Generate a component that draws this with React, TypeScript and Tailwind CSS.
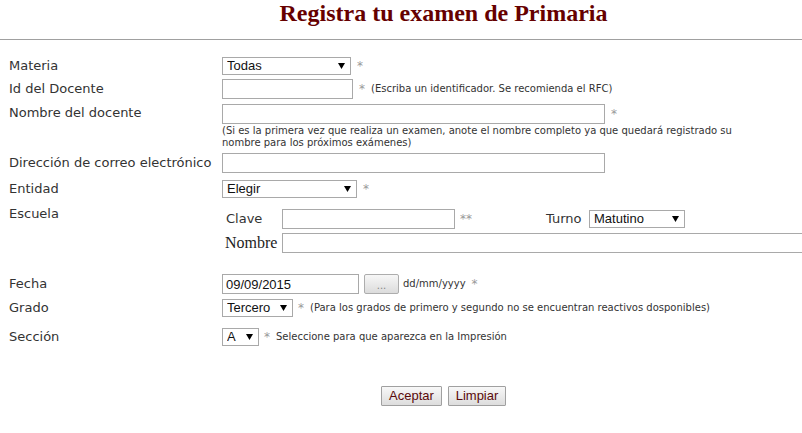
import React from "react";

function Sel({ className, text }: { className: string; text: string }) {
  return (
    <div className={`relative h-[18px] shrink-0 ${className}`}>
      <select className="block appearance-none w-full h-[18px] border border-[#a9a9a9] bg-white pl-[4px] pr-[14px] py-0 text-[13px] leading-[16px] text-[#111] font-['Liberation_Sans',Arial,sans-serif] outline-none">
        <option>{text}</option>
      </select>
      <svg className="absolute right-[6px] top-[6px] pointer-events-none" width="7" height="6" viewBox="0 0 7 6">
        <polygon points="0,0 7,0 3.5,6" fill="#000" />
      </svg>
    </div>
  );
}

function Ast({ className = "" }: { className?: string }) {
  return <span className={`text-[12px] leading-[16px] text-[#999] ${className}`}>*</span>;
}

const label = "w-[222px] shrink-0 pl-[9px] text-[13px] leading-[16px] text-[#333]";
const input = "block h-[20px] shrink-0 border border-[#a9a9a9] bg-white px-[3px] text-[13px] font-['Liberation_Sans',Arial,sans-serif] text-[#111] outline-none";
const note = "text-[10px] leading-[12px] text-[#333]";

export default function App() {
  return (
    <div className="w-[802px] h-[433px] overflow-hidden bg-white font-['DejaVu_Sans',Verdana,sans-serif]">
      <div className="w-[887px]">
        <h1 className="pt-[1px] text-center font-bold text-[24px] leading-[24px] text-[#660000] font-['Liberation_Serif','Times_New_Roman',serif]">
          Registra tu examen de Primaria
        </h1>
        <div className="mt-[14px] border-t border-[#a0a0a0]" />

        <form className="flex flex-col">
          {/* Materia */}
          <div className="mt-[17px] flex items-center h-[18px]">
            <div className={label}>Materia</div>
            <Sel className="w-[129px]" text="Todas" />
            <Ast className="ml-[6px]" />
          </div>

          {/* Id del Docente */}
          <div className="mt-[4px] flex items-center h-[20px]">
            <div className={label}>Id del Docente</div>
            <input className={`${input} w-[131px]`} />
            <Ast className="ml-[6px]" />
            <span className={`${note} ml-[6px]`}>(Escriba un identificador. Se recomienda el RFC)</span>
          </div>

          {/* Nombre del docente */}
          <div className="mt-[5px] flex items-start">
            <div className={`${label} pt-[1px]`}>Nombre del docente</div>
            <div className="flex flex-col">
              <div className="flex items-center h-[20px]">
                <input className={`${input} w-[383px]`} />
                <Ast className="ml-[6px]" />
              </div>
              <div className={`${note} mt-[1px] w-[540px]`}>
                (Si es la primera vez que realiza un examen, anote el nombre completo ya que quedará registrado su
                <br />
                nombre para los próximos exámenes)
              </div>
            </div>
          </div>

          {/* Dirección */}
          <div className="mt-[4px] flex items-center h-[20px]">
            <div className={label}>Dirección de correo electrónico</div>
            <input className={`${input} w-[383px]`} />
          </div>

          {/* Entidad */}
          <div className="mt-[7px] flex items-center h-[18px]">
            <div className={label}>Entidad</div>
            <Sel className="w-[135px]" text="Elegir" />
            <Ast className="ml-[6px]" />
          </div>

          {/* Escuela */}
          <div className="mt-[11px] flex items-start">
            <div className={`${label} -mt-[3px]`}>Escuela</div>
            <div className="flex flex-col">
              <div className="flex items-center h-[20px]">
                <span className="w-[60px] shrink-0 pl-[4px] text-[13px] leading-[16px] text-[#333]">Clave</span>
                <input className={`${input} w-[173px]`} />
                <span className="w-[91px] shrink-0 pl-[5px] text-[12px] leading-[16px] text-[#999]">**</span>
                <span className="w-[43px] shrink-0 text-[13px] leading-[16px] text-[#333]">Turno</span>
                <Sel className="w-[96px]" text="Matutino" />
              </div>
              <div className="mt-[4px] flex items-center h-[20px]">
                <span className="w-[60px] shrink-0 pl-[3px] text-[16px] leading-[18px] text-[#222] font-['Liberation_Serif','Times_New_Roman',serif]">
                  Nombre
                </span>
                <input className={`${input} w-[600px]`} />
              </div>
            </div>
          </div>

          {/* Fecha */}
          <div className="mt-[21px] flex items-center h-[20px]">
            <div className={label}>Fecha</div>
            <input className={`${input} w-[137px]`} defaultValue="09/09/2015" />
            <button
              type="button"
              className="ml-[5px] h-[20px] w-[35px] shrink-0 rounded-[2px] border border-[#adadad] bg-linear-to-b from-[#f7f7f7] to-[#dcdcdc] text-[10px] leading-[12px] text-[#888] pt-[4px]"
            >
              ...
            </button>
            <span className={`${note} ml-[4px]`}>dd/mm/yyyy</span>
            <Ast className="ml-[6px]" />
          </div>

          {/* Grado */}
          <div className="mt-[5px] flex items-center h-[18px]">
            <div className={label}>Grado</div>
            <Sel className="w-[71px]" text="Tercero" />
            <Ast className="ml-[5px]" />
            <span className={`${note} ml-[6px]`}>
              (Para los grados de primero y segundo no se encuentran reactivos dosponibles)
            </span>
          </div>

          {/* Sección */}
          <div className="mt-[11px] flex items-center h-[18px]">
            <div className={label}>Sección</div>
            <Sel className="w-[37px]" text="A" />
            <Ast className="ml-[5px]" />
            <span className={`${note} ml-[6px]`}>Seleccione para que aparezca en la Impresión</span>
          </div>

          {/* Buttons */}
          <div className="mt-[40px] flex justify-center gap-[6px]">
            <button
              type="button"
              className="h-[20px] w-[61px] border border-[#a0a0a0] rounded-[1px] bg-linear-to-b from-[#f8f8f8] to-[#dddddd] text-[13px] leading-[16px] text-[#5a0a0a] font-['Liberation_Sans',Arial,sans-serif]"
            >
              Aceptar
            </button>
            <button
              type="button"
              className="h-[20px] w-[58px] border border-[#a0a0a0] rounded-[1px] bg-linear-to-b from-[#f8f8f8] to-[#dddddd] text-[13px] leading-[16px] text-[#5a0a0a] font-['Liberation_Sans',Arial,sans-serif]"
            >
              Limpiar
            </button>
          </div>
        </form>
      </div>
    </div>
  );
}
